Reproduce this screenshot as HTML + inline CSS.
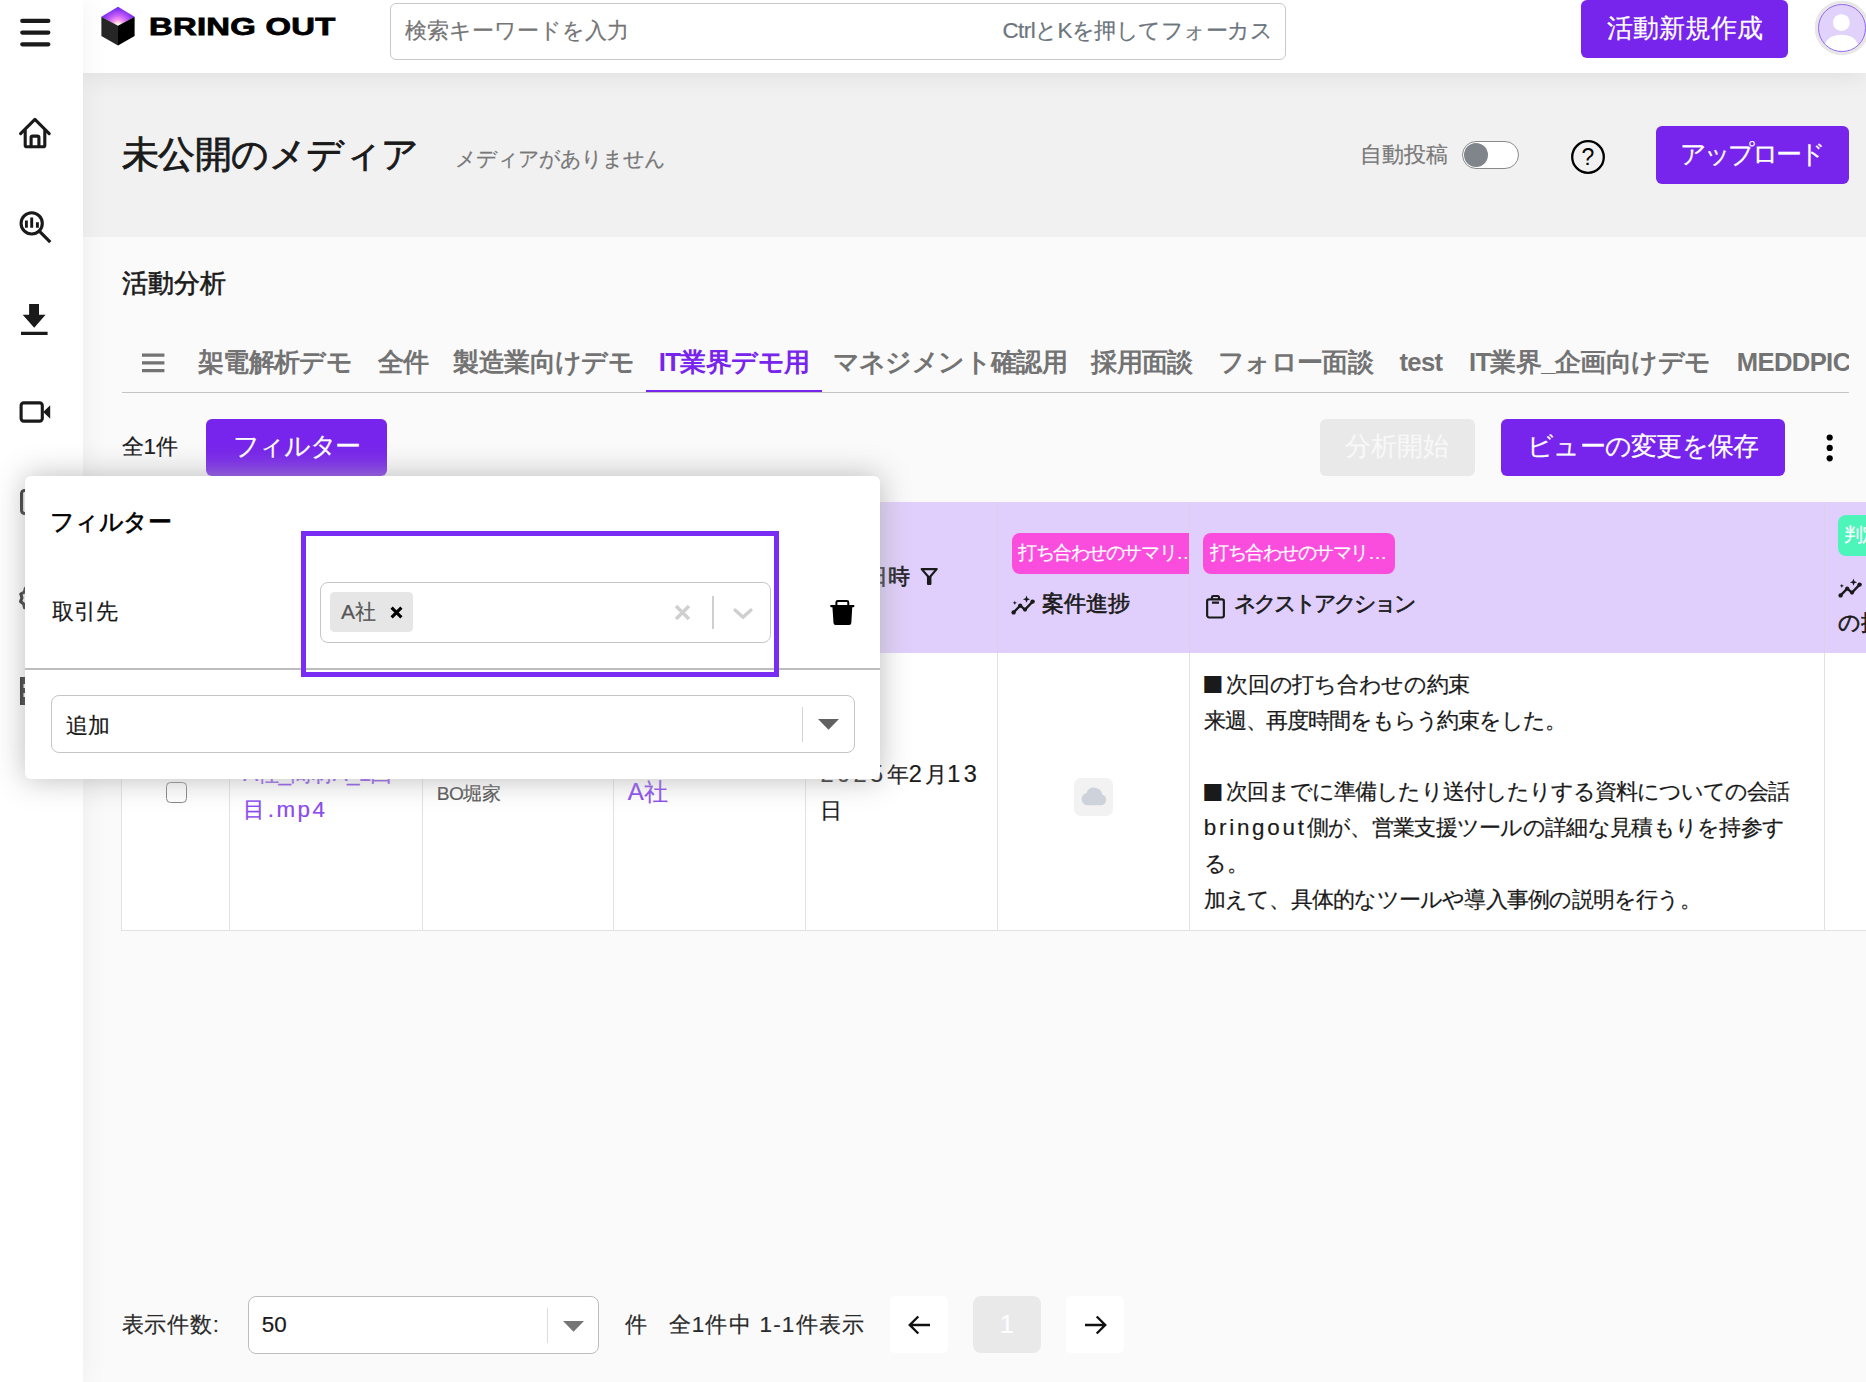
<!DOCTYPE html>
<html lang="ja">
<head>
<meta charset="utf-8">
<title>BRING OUT - 活動分析</title>
<style>
*{box-sizing:border-box;margin:0;padding:0}
html,body{width:1866px;height:1382px;overflow:hidden}
body{position:relative;background:#fafafa;color:#1a1a1a;font-family:"Liberation Sans",sans-serif;font-size:22.4px;line-height:1;-webkit-text-stroke:.2px}
.abs{position:absolute;white-space:nowrap}
svg{display:block;overflow:visible}
.med{-webkit-text-stroke:.6px currentColor}

/* ---------- sidebar ---------- */
.side{position:absolute;left:0;top:0;width:83px;height:1382px;background:#fff;z-index:5;box-shadow:2px 0 26px rgba(0,0,0,.05)}
.side svg{position:absolute}

/* ---------- header ---------- */
.top{position:absolute;left:83px;top:0;width:1783px;height:73px;background:#fff;z-index:4;box-shadow:0 2px 26px rgba(0,0,0,.085)}
.logo-t{left:66.2px;top:11.5px;font-weight:bold;font-size:23px;line-height:30px;letter-spacing:.2px;color:#000;transform:scale(1.425,1);transform-origin:0 50%;-webkit-text-stroke:.8px #000}
.search{left:307px;top:3px;width:896px;height:56.5px;border:1px solid #c9c9c9;border-radius:6px;background:#fff;color:#757575}
.search span{position:absolute;top:0;line-height:54.5px}
.btn{position:absolute;background:#7724ec;color:#fff;border-radius:6px;font-size:25.6px;text-align:center;white-space:nowrap}
.avatar{left:1735.200px;top:4.200px;width:47.600px;height:47.600px;border-radius:50%;background:#e1d2fb;border:1.400px solid #9468f2;box-shadow:0 0 0 3.300px #e7e7e7;overflow:hidden}

/* ---------- grey band ---------- */
.band{position:absolute;left:83px;top:73px;width:1783px;height:164px;background:#f1f1f1}
.h1{left:38.5px;top:59px;font-size:36.6px;line-height:46px;color:#1a1a1a;font-weight:normal;letter-spacing:-.5px;-webkit-text-stroke:.8px #1a1a1a}
.sub{left:371.5px;top:72px;font-size:20.8px;line-height:28px;color:#787878;letter-spacing:-.9px}
.auto{left:1276.5px;top:68px;font-size:22.4px;line-height:28px;color:#787878}
.toggle{left:1378.8px;top:67.9px;width:57.4px;height:28.2px;border-radius:15px;border:1px solid #8a8a8a;background:#fff}
.toggle i{position:absolute;left:1.2px;top:1.1px;width:24px;height:24px;border-radius:50%;background:#80858c}

/* ---------- main ---------- */
.h2{left:121.5px;top:267px;font-size:25.6px;line-height:32px;color:#1a1a1a;font-weight:normal}
.tabs{position:absolute;left:121.5px;top:330px;width:1727.5px;height:63px;border-bottom:1.4px solid #c4c4c4;overflow:hidden;white-space:nowrap;font-size:0}
.tabs a{display:inline-block;vertical-align:top;height:63px;line-height:65px;padding:0;text-align:center;letter-spacing:-.6px;font-size:25.6px;font-weight:bold;color:#737373;text-decoration:none;-webkit-text-stroke:0}
.tabs a.on{color:#7724ec;border-bottom:3.4px solid #7724ec}
.tabs a.ham{width:63.900px;padding:0;position:relative}
.cnt{left:121.5px;top:433px;font-size:22.4px;line-height:28px;color:#1a1a1a}
.btn.dis{background:#e9e9e9;color:#f8f8f8}
.tbl{position:absolute;left:120.700px;top:502px;border-collapse:separate;border-spacing:0;table-layout:fixed;width:1900px;background:#fff}
.tbl th,.tbl td{border-left:1.2px solid #e2e2e2;font-weight:normal;text-align:left;vertical-align:middle;position:relative;padding:0}
.tbl th{background:#e0cffc;height:151.3px;border-left-color:#d9d0ea}
.tbl td{height:277.800px;border-bottom:1.2px solid #e2e2e2;font-size:24px}
.tbl th:first-child{border-left-color:#e0cffc}
.badge{position:absolute;left:13.500px;top:30.800px;height:41.200px;line-height:39.500px;width:191.600px;border-radius:8px;background:#fa4dde;color:#fff;font-size:19.2px;padding:0 6.500px;white-space:nowrap;overflow:hidden;letter-spacing:-1.45px}
.lbl{position:absolute;left:13.500px;font-size:22.4px;line-height:30px;white-space:nowrap;color:#1a1a1a}
.lnk{color:#8b4af0;text-decoration:none}
.sum{position:absolute;left:13.800px;top:13.500px;font-size:22.4px;line-height:35.84px;white-space:nowrap;color:#1a1a1a}
.sum span{display:block}
.w{font-size:23.500px;letter-spacing:3.500px}
.sq{display:inline-block;width:22.400px;font-weight:normal;font-size:35px;line-height:0;text-align:left;letter-spacing:0;position:relative;top:3.300px;left:-1.500px}
.pg{font-size:22.4px;line-height:28px;color:#2a2a2a}
.sel{position:absolute;background:#fff;border:1.2px solid #bdbdbd;border-radius:8px}
.pbtn{position:absolute;top:1296.400px;height:56.400px;background:#fff;border-radius:5px}

/* ---------- filter popup ---------- */
.pop{position:absolute;left:25px;top:475.700px;width:855px;height:303px;background:#fff;border-radius:6px;z-index:10;box-shadow:0 0 30px rgba(172,172,172,.82)}
.pop .ttl{left:25px;top:30px;font-size:24px;line-height:32px;color:#000;font-weight:normal;letter-spacing:-.6px}
.pop .fld{left:26.500px;top:122px;font-size:22.4px;line-height:28px;color:#1a1a1a}
.hl{position:absolute;left:275.900px;top:55.300px;width:478.200px;height:146px;border:5px solid #7a2df2;z-index:2}
.chip{position:absolute;left:9.200px;top:9.200px;width:83px;height:40px;border-radius:4.500px;background:#e6e6e6;color:#555;font-size:21px;line-height:39px;padding-left:10.500px;letter-spacing:-.3px}
.hr{position:absolute;left:0;top:192.400px;width:855px;height:2px;background:#bdbdbd}
</style>
</head>
<body>

<!-- ================= SIDEBAR ================= -->
<aside class="side">
  <!-- hamburger -->
  <svg style="left:20px;top:18px" width="31" height="29" viewBox="0 0 31 29"><g stroke="#1a1a1a" stroke-width="4.3" stroke-linecap="round"><path d="M2.3 2.9H28.3M2.3 14.6H28.3M2.3 26.3H28.3"/></g></svg>
  <!-- home -->
  <svg style="left:18px;top:116px" width="34" height="34" viewBox="0 0 34 34"><g fill="none" stroke="#1a1a1a" stroke-width="3.1" stroke-linejoin="round" stroke-linecap="round"><path d="M2.6 17.6 16.9 3.4 31.2 17.6"/><path d="M7.2 14.5V29.2a1.6 1.6 0 0 0 1.6 1.6H25.2a1.6 1.6 0 0 0 1.6-1.6V14.5"/><path d="M13.1 30.6V21.6a1.5 1.5 0 0 1 1.5-1.5h4.8a1.5 1.5 0 0 1 1.5 1.5v9"/></g></svg>
  <!-- analytics search -->
  <svg style="left:18px;top:209px" width="34" height="34" viewBox="0 0 34 34"><g fill="none" stroke="#1a1a1a" stroke-width="3.1" stroke-linecap="butt"><circle cx="13.7" cy="14.4" r="10.6"/><path d="M21.6 22.4 31.2 32" stroke-linecap="square"/><path d="M8.4 18.8V11.6M13.7 18.8V8.6M19.4 18.8V13.2" stroke-width="2.9"/></g></svg>
  <!-- download -->
  <svg style="left:20px;top:303px" width="30" height="33" viewBox="0 0 30 33"><path fill="#1a1a1a" d="M9.1.9h9.9v10.8h6.6L14.2 24.7 2.7 11.7h6.4zM1 28.7h26.6v3.3H1z"/></svg>
  <!-- video -->
  <svg style="left:18px;top:399px" width="34" height="26" viewBox="0 0 34 26"><rect x="3.1" y="3.9" width="21.2" height="18.2" rx="2.6" fill="none" stroke="#1a1a1a" stroke-width="3.1"/><path fill="#1a1a1a" d="M25.2 13 32.2 6.3V19.8z"/></svg>
  <!-- clipboard (mostly hidden) -->
  <svg style="left:19px;top:488px" width="32" height="28" viewBox="0 0 32 28"><rect x="2.6" y="2.5" width="26" height="23" rx="3" fill="none" stroke="#1a1a1a" stroke-width="3.1"/></svg>
  <!-- gear (mostly hidden) -->
  <svg style="left:19px;top:584px" width="30" height="28" viewBox="0 0 30 28"><g fill="none" stroke="#1a1a1a" stroke-width="3.1"><circle cx="15" cy="14" r="4.5"/><path d="M15 2.5l3 2.6 3.9-.6 1.4 3.7 3.6 1.6-.7 3.9 2.3 3.2-2.6 3-.1 4-3.9.9-2.2 3.3-3.7-1.300L12.300 26.800 9.400 24.000 5.500 23.800 4.700 19.900 1.600 17.500 3.000 13.800 1.800 10.000 5.300 8.100 6.400 4.300 10.400 4.600z" stroke-linejoin="round"/></g></svg>
  <!-- building (mostly hidden) -->
  <svg style="left:20px;top:677px" width="30" height="28" viewBox="0 0 30 28"><path fill="#1a1a1a" fill-rule="evenodd" d="M0 0H30V28H0zM3.500 7H9V11H3.500zM3.500 16H9V20H3.500zM13 7H18V11H13zM13 16H18V20H13z"/></svg>
</aside>

<!-- ================= HEADER ================= -->
<header class="top">
  <svg class="abs" style="left:18px;top:6px" width="35" height="40" viewBox="0 0 35 40">
    <defs>
      <radialGradient id="cg" cx="17" cy="19.500" r="17" gradientUnits="userSpaceOnUse">
        <stop offset="0" stop-color="#fff"/><stop offset=".16" stop-color="#ffe9df"/><stop offset=".32" stop-color="#f79af0"/><stop offset=".62" stop-color="#c55cf7"/><stop offset="1" stop-color="#7a2df5"/>
      </radialGradient>
    </defs>
    <path d="M17 .7 33.600 10.700 17 19.700.4 10.700z" fill="url(#cg)"/>
    <path d="M.4 10.700 17 19.700V39.600L.4 29.900z" fill="#262626"/>
    <path d="M33.600 10.700 17 19.700V39.600l16.600-9.700z" fill="#000"/>
  </svg>
  <div class="abs logo-t">BRING OUT</div>
  <div class="abs search"><span style="left:13.500px">検索キーワードを入力</span><span style="right:13px;letter-spacing:-.55px;color:#6c757d">CtrlとKを押してフォーカス</span></div>
  <div class="btn" style="left:1498px;top:0;width:207px;height:57.8px;line-height:56px">活動新規作成</div>
  <div class="abs avatar"><svg width="44.800" height="44.800" viewBox="0 0 51 51"><circle cx="25.500" cy="20" r="9.600" fill="#fff"/><path d="M5.500 52c0-12.500 8.700-18 20-18s20 5.500 20 18z" fill="#fff"/></svg></div>
</header>

<!-- ================= GREY BAND ================= -->
<section class="band">
  <h1 class="abs h1">未公開のメディア</h1>
  <div class="abs sub">メディアがありません</div>
  <div class="abs auto">自動投稿</div>
  <div class="abs toggle"><i></i></div>
  <svg class="abs" style="left:1486.500px;top:66px" width="36" height="36" viewBox="0 0 36 36"><circle cx="18" cy="18" r="15.800" fill="none" stroke="#000" stroke-width="2.300"/><text x="18" y="26" text-anchor="middle" font-family="Liberation Sans, sans-serif" font-size="23" fill="#000">?</text></svg>
  <div class="btn" style="left:1572.700px;top:52.900px;width:193.400px;height:57.800px;line-height:56px;letter-spacing:-3.100px;text-indent:-2px">アップロード</div>
</section>

<!-- ================= MAIN ================= -->
<main>
  <h2 class="abs h2 med">活動分析</h2>

  <nav class="tabs">
    <a class="ham"><svg style="position:absolute;left:20.500px;top:22.500px" width="23" height="20" viewBox="0 0 23 20"><path d="M0 2.200H22.400M0 9.900H22.400M0 17.600H22.400" stroke="#737373" stroke-width="3.200"/></svg></a><a style="width:179.200px">架電解析デモ</a><a style="width:76.800px">全件</a><a style="width:204.800px">製造業向けデモ</a><a class="on" style="width:175.800px">IT業界デモ用</a><a style="width:256px">マネジメント確認用</a><a style="width:128px">採用面談</a><a style="width:179.200px">フォロー面談</a><a style="width:71.600px">test</a><a style="width:265.800px">IT業界_企画向けデモ</a><a style="width:160px">MEDDPICC</a><a style="width:128px">新規商談</a>
  </nav>

  <div class="abs cnt">全1件</div>
  <div class="btn" style="left:206.100px;top:418.800px;width:180.700px;height:57px;line-height:55px;letter-spacing:-1.300px">フィルター</div>
  <div class="btn dis" style="left:1319.800px;top:419.300px;width:155.300px;height:56.600px;line-height:54.500px">分析開始</div>
  <div class="btn" style="left:1501px;top:419.300px;width:283.700px;height:56.600px;line-height:54.500px;letter-spacing:-.7px">ビューの変更を保存</div>
  <svg class="abs" style="left:1826px;top:433.500px" width="8" height="28" viewBox="0 0 8 28"><circle cx="3.700" cy="3.500" r="3.100"/><circle cx="3.700" cy="13.900" r="3.100"/><circle cx="3.700" cy="24.300" r="3.100"/></svg>

  <table class="tbl">
    <colgroup><col style="width:108px"><col style="width:193.500px"><col style="width:191px"><col style="width:192px"><col style="width:192px"><col style="width:191.800px"><col style="width:635.200px"><col style="width:196.500px"></colgroup>
    <thead><tr>
      <th></th>
      <th><span class="lbl" style="top:59px">メディア名</span></th>
      <th><span class="lbl" style="top:59px">担当者</span></th>
      <th><span class="lbl" style="top:59px">取引先</span></th>
      <th><span class="lbl med" style="top:59.500px;left:16px">実施日時 <svg style="display:inline-block;vertical-align:-1px;margin-left:3.800px" width="18.400" height="17" viewBox="0 0 18.400 17"><path d="M1.700 1.100H16.700L9.200 9.700z" fill="none" stroke="#1a1a1a" stroke-width="2.200" stroke-linejoin="round"/><rect x="6.950" y="8.300" width="4.500" height="8.600" rx=".8" fill="#1a1a1a"/></svg></span></th>
      <th style="overflow:hidden"><span class="badge" style="border-radius:8px 0 0 8px">打ち合わせのサマリ…</span><span class="lbl med" style="top:86.500px"><svg style="display:inline-block;vertical-align:-7.500px;margin-right:7px;margin-left:-.8px" width="24" height="24" viewBox="0 0 24 24"><g fill="#1a1a1a"><path d="M2.600 18.400 9.200 11.600 14 15.600 21.600 7.600" fill="none" stroke="#1a1a1a" stroke-width="2.300" stroke-linejoin="round"/><circle cx="2.600" cy="18.400" r="2.200"/><circle cx="9.200" cy="11.600" r="2.100"/><circle cx="14" cy="15.600" r="2.100"/><circle cx="21.600" cy="7.600" r="2.200"/><path d="M15.500 1.600l.95 2.650 2.650.95-2.650.95-.95 2.650-.95-2.650-2.650-.95 2.650-.95zM3.800 6.700l.6 1.500 1.500.6-1.500.6-.6 1.500-.6-1.500-1.500-.6 1.500-.6z"/></g></svg>案件進捗</span></th>
      <th><span class="badge">打ち合わせのサマリ…</span><span class="lbl med" style="top:86.500px;letter-spacing:-2.950px"><svg style="display:inline-block;vertical-align:-8.300px;margin:0 8.500px 0 2.800px" width="19" height="23.500" viewBox="0 0 20 26" preserveAspectRatio="none"><g fill="none" stroke="#1a1a1a" stroke-width="2.300" stroke-linejoin="round"><rect x="1.200" y="4.800" width="17.600" height="20" rx="2"/><path d="M6.300 4.800V2.600a1.400 1.400 0 0 1 1.400-1.400h4.600a1.400 1.400 0 0 1 1.400 1.400v2.200M6.300 8.400h7.400" /></g></svg>ネクストアクション</span></th>
      <th><span class="badge" style="top:12.600px;left:12.500px;background:#4df5ba">判定結果のサマリ…</span><span class="lbl med" style="top:69.500px;left:12.500px;line-height:34.800px;white-space:normal;width:170px"><svg style="display:inline-block;vertical-align:-5px;margin-right:7px" width="24" height="24" viewBox="0 0 24 24"><g fill="#1a1a1a"><path d="M2.600 18.400 9.200 11.600 14 15.600 21.600 7.600" fill="none" stroke="#1a1a1a" stroke-width="2.300" stroke-linejoin="round"/><circle cx="2.600" cy="18.400" r="2.200"/><circle cx="9.200" cy="11.600" r="2.100"/><circle cx="14" cy="15.600" r="2.100"/><circle cx="21.600" cy="7.600" r="2.200"/><path d="M15.500 1.600l.95 2.650 2.650.95-2.650.95-.95 2.650-.95-2.650-2.650-.95 2.650-.95zM3.800 6.700l.6 1.500 1.500.6-1.500.6-.6 1.500-.6-1.500-1.500-.6 1.500-.6z"/></g></svg>競合他社<br>の提案状況</span></th>
    </tr></thead>
    <tbody><tr>
      <td><span style="position:absolute;left:44.800px;top:128.800px;width:21px;height:21px;border:1.600px solid #858585;border-radius:4.500px;background:#fff"></span></td>
      <td><a class="lnk" style="position:absolute;left:13.500px;top:103px;font-size:22.400px;line-height:36px"><span style="letter-spacing:-.75px">A社_商材A_1回</span><br><span style="letter-spacing:2.500px">目.mp4</span></a></td>
      <td><span style="position:absolute;left:13.500px;top:128px;font-size:19.200px;line-height:26px;color:#555;letter-spacing:-.5px">BO堀家</span></td>
      <td><a class="lnk" style="position:absolute;left:13.500px;top:120.500px;line-height:36px;letter-spacing:.8px">A社</a></td>
      <td><span style="position:absolute;left:14.200px;top:103px;font-size:22.400px;line-height:36px;color:#1a1a1a"><span class="w">2025</span>年<span class="w">2</span>月<span class="w">13</span><br>日</span></td>
      <td><span style="position:absolute;left:75.600px;top:124.700px;width:39px;height:38.400px;border-radius:7px;background:#f2f2f2"><svg style="position:absolute;left:7px;top:9.500px" width="26" height="19" viewBox="0 0 26 19"><path d="M6.800 18.300A6.300 6.300 0 0 1 5.400 5.900 8.300 8.300 0 0 1 21.300 7.400 5.600 5.600 0 0 1 20.200 18.300z" fill="#ced3db"/></svg></span></td>
      <td><div class="sum"><span style="letter-spacing:-.27px"><b class="sq">■</b>次回の打ち合わせの約束</span><span style="letter-spacing:-1.12px">来週、再度時間をもらう約束をした。</span><span>&nbsp;</span><span style="letter-spacing:-.96px"><b class="sq">■</b>次回までに準備したり送付したりする資料についての会話</span><span style="letter-spacing:-.7px"><span style="display:inline;letter-spacing:2.750px">bringout</span>側が、営業支援ツールの詳細な見積もりを持参す</span><span>る。</span><span style="letter-spacing:-.78px">加えて、具体的なツールや導入事例の説明を行う。</span></div></td>
      <td></td>
    </tr></tbody>
  </table>

  <div class="abs pg" style="left:121.500px;top:1310.500px;letter-spacing:.8px">表示件数:</div>
  <div class="sel" style="left:248.200px;top:1296.400px;width:350.500px;height:57.200px"><span class="pg" style="position:absolute;left:12.500px;top:13.500px;color:#1a1a1a">50</span><i style="position:absolute;left:297.500px;top:10.500px;width:1.200px;height:35.500px;background:#dcdcdc"></i><svg style="position:absolute;left:313.500px;top:23.300px" width="22" height="11" viewBox="0 0 22 11"><path d="M0 0H21L10.500 10.800z" fill="#757575"/></svg></div>
  <div class="abs pg" style="left:624.500px;top:1310.500px">件</div>
  <div class="abs pg" style="left:668.500px;top:1310.500px;letter-spacing:1.250px">全1件中 1-1件表示</div>
  <div class="pbtn" style="left:890px;width:58px"><svg style="position:absolute;left:17.500px;top:18.500px" width="23" height="20" viewBox="0 0 23 20"><path d="M10.300 1.500 1.800 10l8.500 8.500M2 10H22" fill="none" stroke="#111" stroke-width="2.400"/></svg></div>
  <div class="pbtn" style="left:973px;width:67.800px;background:#e9e9e9;border-radius:8px;color:#fdfdfd;font-size:25.600px;line-height:56px;text-align:center">1</div>
  <div class="pbtn" style="left:1065.900px;width:58.200px"><svg style="position:absolute;left:18px;top:18.500px" width="23" height="20" viewBox="0 0 23 20"><path d="M12.700 1.500 21.200 10l-8.500 8.500M21 10H1" fill="none" stroke="#111" stroke-width="2.400"/></svg></div>
</main>


<!-- ================= FILTER POPUP ================= -->
<div class="pop">
  <h3 class="abs ttl med">フィルター</h3>
  <div class="abs fld">取引先</div>
  <div class="hl"></div>
  <div class="sel" style="left:295.200px;top:106.300px;width:450.500px;height:61.500px;border-color:#c6c6c6">
    <span class="chip">A社<svg style="position:absolute;left:60px;top:14px" width="13" height="13" viewBox="0 0 13 13"><path d="M1.600 1.600 11.400 11.400M11.400 1.600 1.600 11.400" stroke="#000" stroke-width="3.100"/></svg></span>
    <svg style="position:absolute;left:352.500px;top:21.400px" width="17" height="17" viewBox="0 0 17 17"><path d="M2 2 15 15M15 2 2 15" stroke="#cfcfcf" stroke-width="3.300"/></svg>
    <i style="position:absolute;left:390.500px;top:13.500px;width:2px;height:33px;background:#cfcfcf"></i>
    <svg style="position:absolute;left:412px;top:25px" width="20" height="12" viewBox="0 0 20 12"><path d="M2 2 10 9.300 18 2" fill="none" stroke="#cfcfcf" stroke-width="3.300" stroke-linecap="round" stroke-linejoin="round"/></svg>
  </div>
  <svg class="abs" style="left:805px;top:124.200px" width="25" height="26" viewBox="0 0 25 26"><path d="M6.400 5.500V2.400a1.400 1.400 0 0 1 1.400-1.400h9.100a1.400 1.400 0 0 1 1.400 1.400V5.500" fill="none" stroke="#000" stroke-width="2"/><rect x=".1" y="4.900" width="24.400" height="2.300" rx="1.100" fill="#000"/><path d="M2.400 6.500H22.300L21.300 23a2.200 2.200 0 0 1-2.200 2.100H5.700A2.200 2.200 0 0 1 3.500 23z" fill="#000"/></svg>
  <div class="hr"></div>
  <div class="sel" style="left:26.100px;top:219.300px;width:804px;height:58.200px;border-color:#c6c6c6"><span style="position:absolute;left:13.500px;top:16.300px;font-size:22.4px;line-height:28px;color:#1a1a1a">追加</span><i style="position:absolute;left:749.500px;top:11.500px;width:1.300px;height:35px;background:#d4d4d4"></i><svg style="position:absolute;left:766px;top:23.300px" width="22" height="11" viewBox="0 0 22 11"><path d="M0 0H21L10.500 10.800z" fill="#616161"/></svg></div>
</div>


</body>
</html>
